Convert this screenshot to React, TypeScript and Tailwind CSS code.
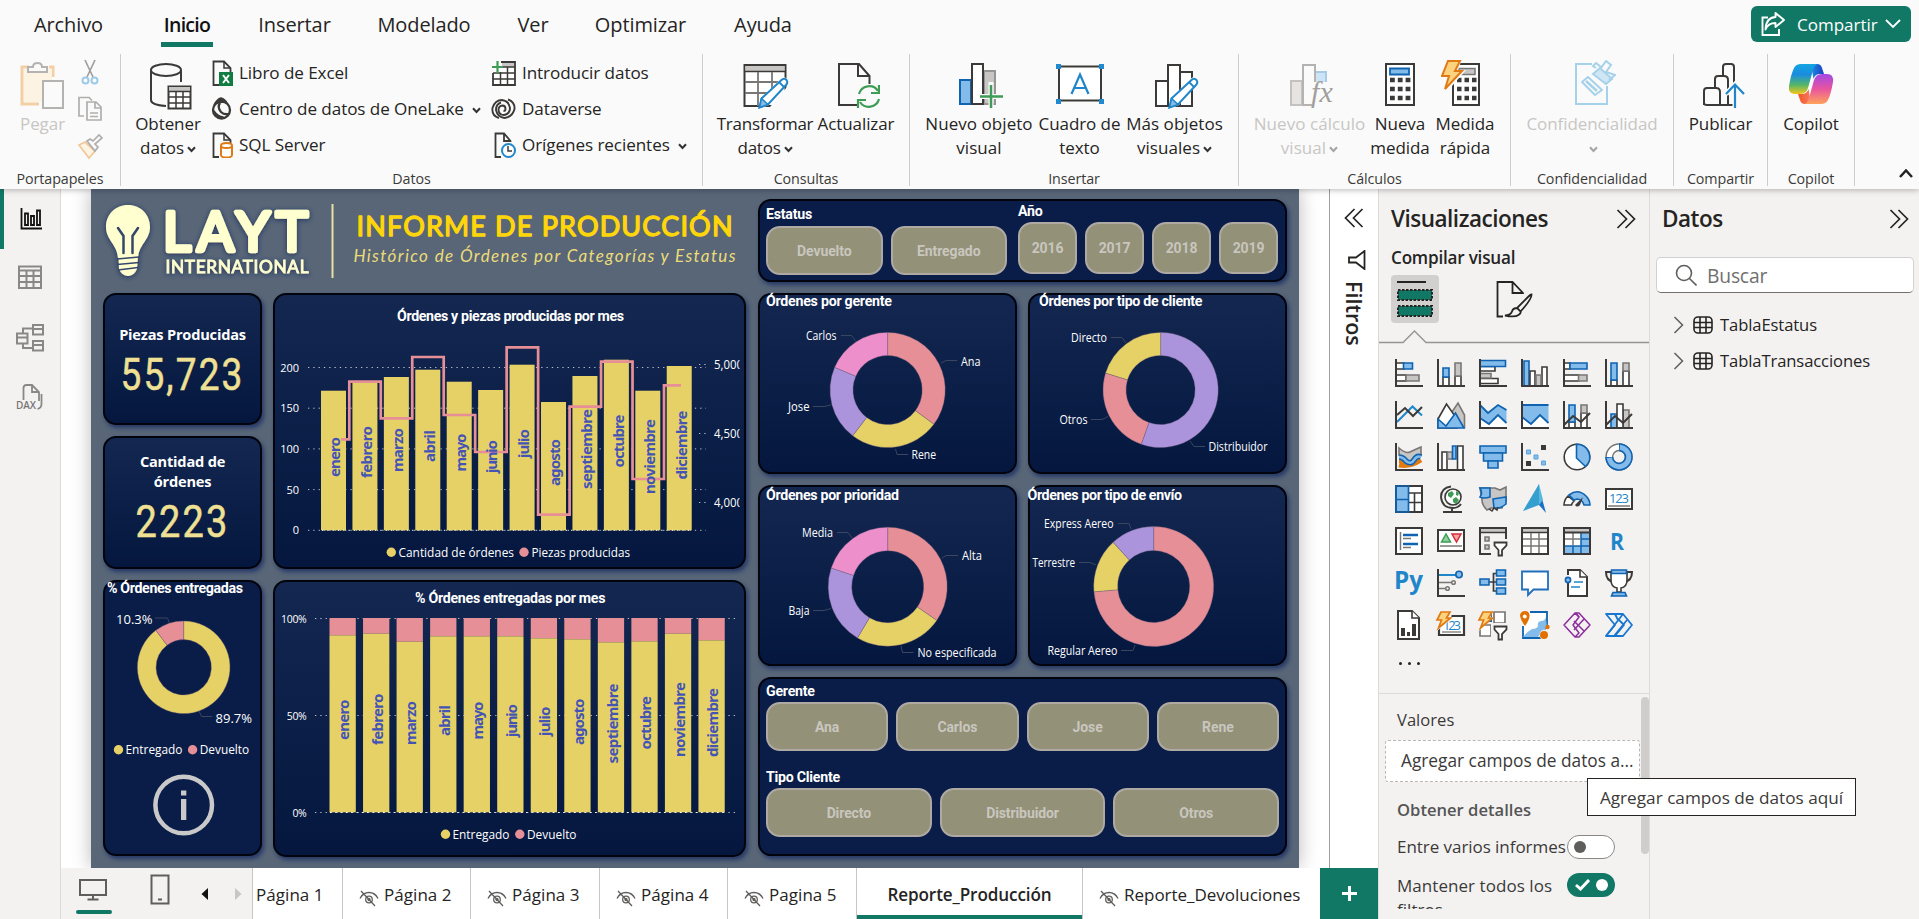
import type { ReactNode } from "react";

const YELLOW = "#e6d166";
const PINK = "#e68f96";
const PURPLE = "#ab94db";
const MAGENTA = "#ed8fcb";
const DARK = "#3b3a39";
const BLUE = "#83bbeb";
const BLUE_LINE = "#0f63b0";
const GRAY = "#c8c6c4";
const GRAY_LINE = "#797775";
const MONTHS = ["enero", "febrero", "marzo", "abril", "mayo", "junio", "julio", "agosto", "septiembre", "octubre", "noviembre", "diciembre"];

/* ---------- ribbon ---------- */

function Caret({ color = "#333" }: { color?: string }) {
  return (
    <svg className="ml-[3px] inline-block" width="9" height="7" viewBox="0 0 9 7" fill="none" stroke={color} strokeWidth="2">
      <path d="M1 1.200 4.500 5 8 1.200" />
    </svg>
  );
}

function Group({ label, className, children }: { label: string; className: string; children: ReactNode }) {
  return (
    <div className={`flex h-[132px] shrink-0 flex-col border-r border-[#cfcdcb] ${className}`}>
      <div className="flex h-[115px] shrink-0">{children}</div>
      <div className="text-center text-[14.3px] leading-5 whitespace-nowrap text-[#3b3a39]">{label}</div>
    </div>
  );
}

function Big({ icon, lines, caret, disabled, className }: { icon: ReactNode; lines: string[]; caret?: boolean; disabled?: boolean; className: string }) {
  return (
    <div className={`flex shrink-0 flex-col items-center pt-[6px] ${className}`}>
      <svg width="48" height="50" viewBox="0 0 48 50" fill="none">{icon}</svg>
      <div className={`mt-[2px] text-center text-[17px] leading-6 whitespace-nowrap ${disabled ? "text-[#c8c6c4]" : "text-[#252423]"}`}>
        {lines.map((line, i) => (
          <div key={i}>
            {line}
            {caret && i === lines.length - 1 && <Caret color={disabled ? "#a6a4a2" : "#333"} />}
          </div>
        ))}
      </div>
    </div>
  );
}

function Small({ icon, text, caret, wide }: { icon: ReactNode; text: string; caret?: boolean; wide?: boolean }) {
  return (
    <div className="flex h-9 items-center whitespace-nowrap">
      <svg width="26" height="26" viewBox="0 0 26 26" fill="none">{icon}</svg>
      <span className={wide ? "ml-[6px]" : "ml-[3px]"}>{text}</span>
      {caret && <span className="ml-[5px]"><Caret /></span>}
    </div>
  );
}

const pencil = (
  <>
    <path d="M18 49 20.500 38 40 18.500Q43 16 46 19 48 21.500 46 24L28 45Z" fill="#fafafa" />
    <path d="M18.500 47.500 20.500 38.500 40.500 20Q43 17.500 45.500 20 47.300 22.500 45 25L27 44.500Z" stroke="#1f86c9" strokeWidth="2" fill="#fff" />
    <path d="M18.500 47.500 20.500 38.500 27 44.500Z" fill={BLUE} stroke="#1f86c9" strokeWidth="1.500" />
    <path d="m38 22 5 5" stroke="#1f86c9" strokeWidth="1.800" />
  </>
);

const pageMini = <path d="M9 25H3.500V1.500H14L20.500 8v4" stroke={DARK} strokeWidth="1.800" />;

const icons = {
  paste: (
    <>
      <path d="M10 7H3v37h17M30 7h4v10" stroke="#f3cfa4" strokeWidth="3" />
      <path d="M5 9h28v33H5z" fill="#fdf3e2" />
      <path d="M9 12V7h5q0-4 4.500-4T23 7h5v5Z" fill="#fafafa" stroke="#b5b3b1" strokeWidth="2" />
      <path d="M24 21h20v27H24z" fill="#fafafa" stroke="#b5b3b1" strokeWidth="2" />
    </>
  ),
  db: (
    <>
      <ellipse cx="22" cy="10" rx="15" ry="6" stroke={DARK} strokeWidth="2" />
      <path d="M7 10v30q0 5 15 6M37 10v12" stroke={DARK} strokeWidth="2" />
      <path d="M24.500 26.500h22v22h-22z" fill="#fff" stroke={DARK} strokeWidth="2" />
      <path d="M25 27h21v4H25z" fill={GRAY} />
      <path d="M25 31.500h21M25 37h21M25 43h21M32 31v17M39 31v17" stroke={DARK} strokeWidth="1.500" />
    </>
  ),
  transform: (
    <>
      <path d="M3.500 5h41v41h-41z" fill="#fff" stroke={DARK} strokeWidth="2" />
      <path d="M4.500 6h39v5h-39z" fill={GRAY} />
      <path d="M4 11.500h40" stroke={DARK} strokeWidth="1.500" />
      <path d="M4 22h40M4 33h26M17 12v34M31 12v22" stroke={GRAY_LINE} strokeWidth="1.800" />
      <path d="M29 47 46 27v20Z" fill="#fafafa" />
      {pencil}
    </>
  ),
  refresh: (
    <>
      <path d="M27 45H7V4h20l10.500 12v8M26 4v12h11" stroke={DARK} strokeWidth="2" />
      <path d="M27 34a10.500 10.500 0 0 1 19-3M47 39a10.500 10.500 0 0 1-19 3" stroke="#3f9c56" strokeWidth="2.200" />
      <path d="M47 25v8h-8M26 48v-8h8" stroke="#3f9c56" strokeWidth="2.200" />
    </>
  ),
  newVisual: (
    <>
      <path d="M29 11h11v33H29z" fill={GRAY} stroke="#979593" strokeWidth="2" />
      <path d="M5 20h11v24H5z" fill={BLUE} stroke={BLUE_LINE} strokeWidth="2" />
      <path d="M17 4h11v40H17z" fill="#fff" stroke={DARK} strokeWidth="2" />
      <path d="M36 22v28M23 36.500h26" stroke="#fafafa" strokeWidth="5" />
      <path d="M36 25v23M25 36.500h23" stroke="#3f9c56" strokeWidth="2.500" />
    </>
  ),
  textBox: (
    <>
      <path d="M3 6.500h42v34H3z" fill="#fff" stroke={DARK} strokeWidth="2" />
      <path d="M0 4h5v5H0zM43 4h5v5h-5zM0 39h5v5H0zM43 39h5v5h-5z" fill="#1f8ad2" />
      <path d="M15.500 34 24 14.500 32.500 34M18.500 28h11" stroke="#1f86c9" strokeWidth="2.200" />
    </>
  ),
  moreVisuals: (
    <>
      <path d="M29 12h12v34H29zM5 21h12v25H5z" fill="#fff" stroke={DARK} strokeWidth="2" />
      <path d="M17 5h12v41H17z" fill="#fff" stroke={DARK} strokeWidth="2" />
      {pencil}
    </>
  ),
  newCalc: (
    <>
      <path d="M29 12h11v20H29z" fill="#cde3f6" stroke="#a9cce6" strokeWidth="2" />
      <path d="M5 21h11v24H5z" fill="#e5e4e3" stroke="#c4c2c0" strokeWidth="2" />
      <path d="M17 5h12v40H17z" fill="#fafafa" stroke="#b5b3b1" strokeWidth="2" />
      <path d="M26 22h20v28H26z" fill="#fafafa" />
      <text x="25" y="42" fill="#a19f9d" fontSize="30" fontStyle="italic" fontFamily="Liberation Serif, serif">fx</text>
    </>
  ),
  calc: (
    <>
      <path d="M10 4h28v41H10z" fill="#fff" stroke={DARK} strokeWidth="2" />
      <path d="M14 8.500h19v6H14z" fill={BLUE} stroke={BLUE_LINE} strokeWidth="1.800" />
      <path d="M14 20h21M14 29h21M14 38h21" stroke={DARK} strokeWidth="4.500" strokeDasharray="4.800 3" />
    </>
  ),
  quick: (
    <>
      <path d="M12 4h26v41H12z" fill="#fff" stroke={DARK} strokeWidth="2" />
      <path d="M18 8.500h16v6H18z" fill={GRAY} stroke={GRAY_LINE} strokeWidth="1.500" />
      <path d="M16 20h20M16 29h20M16 38h20" stroke={DARK} strokeWidth="4.500" strokeDasharray="4.500 3" />
      <path d="M5-1h16l-4 11h8L4 34l1-12H-1Z" fill="#fafafa" />
      <path d="M7 1h12l-5 10h7L4 29l4-13H1Z" fill="#fdd27f" stroke="#e07b13" strokeWidth="2" />
    </>
  ),
  sensitivity: (
    <g stroke="#a5d2ea" strokeWidth="2">
      <path d="M24 4H8v40h31V26" />
      <path d="m14 22 6-5 14 13-7 5Z" strokeLinejoin="round" />
      <path d="m18 21 11 10" strokeWidth="2.500" />
      <path d="m25 14 7-6 12 11-6 5Z" fill="#cfe6f4" />
      <path d="m33 8 5-7 5 4-5 7 9 3-6 5M28 8l-3-2 3-3 5 4" />
    </g>
  ),
  publish: (
    <>
      <path d="M7 45V31q0-3 3-3h8V19q0-3 3-3h5V7q0-3 3-3h5q3 0 3 3v18M7 43q0 2 3 2h26M19 28q4 0 4 4v12M19 28h1" stroke={DARK} strokeWidth="2" />
      <path d="M27 16q4 0 4 4v25" stroke={DARK} strokeWidth="2" />
      <path d="M38 48V25M29 34l9-9.500L47 34" stroke="#fafafa" strokeWidth="5" />
      <path d="M38 48V25M29 34l9-9.500L47 34" stroke="#1f86c9" strokeWidth="2.200" />
    </>
  ),
  copilot: (
    <>
      <defs>
        <linearGradient id="cp1" x1="0" y1="0" x2="0" y2="1"><stop offset="0" stopColor="#12a5e0" /><stop offset=".35" stopColor="#1a8ce0" /><stop offset=".7" stopColor="#55b765" /><stop offset="1" stopColor="#f6c51b" /></linearGradient>
        <linearGradient id="cp2" x1="0" y1="0" x2="0" y2="1"><stop offset="0" stopColor="#a347e6" /><stop offset=".5" stopColor="#e8559f" /><stop offset="1" stopColor="#ffa25a" /></linearGradient>
        <linearGradient id="cp3" x1="0" y1="0" x2="1" y2="0"><stop offset="0" stopColor="#1a8ce0" /><stop offset="1" stopColor="#1c3fc4" /></linearGradient>
        <linearGradient id="cp4" x1="0" y1="0" x2="1" y2="0"><stop offset="0" stopColor="#f05a28" /><stop offset="1" stopColor="#f9775e" /></linearGradient>
      </defs>
      <path d="M24 4h6q4 0 5 4l2 6h-4q-5 0-6.500 5Z" fill="url(#cp3)" />
      <path d="M24 44h-6q-4 0-5-4l-2-6h4q5 0 6.500-5Z" fill="url(#cp4)" />
      <path d="M14 4h16q-3 2-4 6l-5 18q-2 6-8 6H8Q1 34 2 26 4 14 7 8 9 4 14 4Z" fill="url(#cp1)" />
      <path d="M34 44H18q3-2 4-6l5-18q2-6 8-6h5q7 0 6 8-2 12-5 18-2 4-7 4Z" fill="url(#cp2)" />
    </>
  ),
  excel: (
    <>
      {pageMini}
      <path d="M14 1.500V8h6" stroke={DARK} strokeWidth="1.500" />
      <path d="M9 12h14v14H9z" fill="#107c41" />
      <path d="m13 15 6 8m0-8-6 8" stroke="#fff" strokeWidth="2" />
    </>
  ),
  onelake: (
    <>
      <circle cx="11.500" cy="14" r="8.500" stroke={DARK} strokeWidth="2.300" />
      <path d="M4 9Q7 3 11 2q4 1 6 5-4-2-7 0" fill={DARK} stroke={DARK} strokeWidth="1.500" />
      <path d="M10 7q-3 4 1 9 3 3 8 2M3.500 15q4 6 10 6.500" stroke={DARK} strokeWidth="2.300" />
    </>
  ),
  sql: (
    <>
      {pageMini}
      <path d="M14 1.500V8h6" stroke={DARK} strokeWidth="1.500" />
      <path d="M11 14v9q0 2.500 5.500 2.500T22 23v-9" fill="#fff" stroke="#e07b13" strokeWidth="2" />
      <ellipse cx="16.500" cy="13.500" rx="5.500" ry="2.500" fill="#fff" stroke="#e07b13" strokeWidth="2" />
    </>
  ),
  enter: (
    <>
      <path d="M11 2h14v23H3V13" fill="#fff" stroke={DARK} strokeWidth="1.800" />
      <path d="M12 3h12v4H12z" fill={GRAY} />
      <path d="M12 7h13M3 13h22M3 19h22M10.500 12v13M17.500 7v18" stroke={DARK} strokeWidth="1.500" />
      <path d="M7.500 1v12M2 7h11" stroke="#3f9c56" strokeWidth="2.200" />
    </>
  ),
  dataverse: (
    <g stroke={DARK} strokeWidth="1.900">
      <path d="M9 22Q1.500 20 2.500 12 5 4 12 4q7 1 8 8 0 6-6 7-5 0-5.500-5 0-4 4-4.500 3 0 3 3.500 0 2-2 2" />
      <path d="M18 3.500q7 2.500 6.500 9.500-2 8-10 9-7-1-8.500-8 0-6 5-7.500" />
    </g>
  ),
  recent: (
    <>
      <path d="M11 25H5.500V1.500H14L20.500 9v1M14 1.500V9h6" stroke={DARK} strokeWidth="1.800" />
      <circle cx="18.500" cy="18.500" r="6.500" fill="#fff" stroke="#1f86c9" strokeWidth="2" />
      <path d="M18 14v5h4" stroke={DARK} strokeWidth="1.500" />
    </>
  ),
};

function Ribbon() {
  const tabs: [string, string][] = [
    ["Archivo", "ml-[34px] w-[69px]"],
    ["Inicio", "ml-[58px] w-[52px]"],
    ["Insertar", "ml-[47px] w-[69px]"],
    ["Modelado", "ml-[48px] w-[94px]"],
    ["Ver", "ml-[47px] w-[30px]"],
    ["Optimizar", "ml-[47px] w-[91px]"],
    ["Ayuda", "ml-[48px] w-[58px]"],
  ];
  return (
    <header className="relative z-10 h-[189px] shrink-0 bg-[#fafafa] shadow-[0_1px_6px_rgba(0,0,0,0.28)]">
      <div className="flex h-[54px] items-start">
        {tabs.map(([name, cls]) => (
          <div key={name} className={`flex h-[47px] flex-col whitespace-nowrap ${cls}`}>
            <span className={`flex h-[42px] items-center justify-center pt-[7px] ${name === "Inicio" ? "text-[19.5px] font-semibold tracking-[-0.7px] text-[#111]" : "text-[20px] tracking-[-0.1px] text-[#252423]"}`}>{name}</span>
            {name === "Inicio" && <span className="h-[5px] bg-[#117865]" />}
          </div>
        ))}
        <div className="mt-[6px] mr-2 ml-auto flex h-9 w-[160px] items-center rounded-[6px] bg-[#117865] pl-[9px] text-white">
          <svg width="26" height="26" viewBox="0 0 26 26" fill="none" stroke="#fff" strokeWidth="1.900">
            <path d="M8 6.500H2.500V24H19v-6" />
            <path d="M15.500 2 24 9l-8.500 7v-4Q8 12 5.500 18.500 6 6.500 15.500 6Z" strokeLinejoin="round" />
          </svg>
          <span className="ml-[11px] pt-px text-[17px]">Compartir</span>
          <svg className="ml-[7px]" width="16" height="10" viewBox="0 0 16 10" fill="none" stroke="#fff" strokeWidth="1.800"><path d="m1 1 7 7 7-7" /></svg>
        </div>
      </div>
      <div className="flex text-[17.1px] tracking-[-0.08px] text-[#252423]">
        <Group label="Portapapeles" className="w-[121px]">
          <Big icon={icons.paste} lines={["Pegar"]} disabled className="ml-[16px] w-[53px]" />
          <div className="flex flex-col gap-[11px] pt-[5px] pl-[8px]">
            <svg width="26" height="26" viewBox="0 0 26 26" fill="none" strokeWidth="1.700">
              <path d="M8 1 16 18M18 1 10 18" stroke="#a19f9d" />
              <circle cx="8.500" cy="21.500" r="3" stroke="#9fcbe8" strokeWidth="2" /><circle cx="17.500" cy="21.500" r="3" stroke="#9fcbe8" strokeWidth="2" />
            </svg>
            <svg width="26" height="26" viewBox="0 0 26 26" fill="none" stroke="#b0aeac" strokeWidth="1.700">
              <path d="M7 20H2V1.500h10l3 3M10 6h9l5 5v13H10ZM18 6v6h6M13 17h8M13 20.500h8" />
            </svg>
            <svg width="26" height="26" viewBox="0 0 26 26" fill="none" strokeWidth="1.700">
              <path d="m2 12 6-3 10 9-6 7Z" fill="#fdf3e2" stroke="#f0c898" /><path d="m10 8 3-2 3 2 6-6 3 3-7 6 3 3-3 4Z" fill="#fafafa" stroke="#b0aeac" />
            </svg>
          </div>
        </Group>
        <Group label="Datos" className="w-[582px]">
          <Big icon={icons.db} lines={["Obtener", "datos"]} caret className="ml-[5px] w-[84px]" />
          <div className="w-[280px] pt-px">
            <Small icon={icons.excel} text="Libro de Excel" />
            <Small icon={icons.onelake} text="Centro de datos de OneLake" caret />
            <Small icon={icons.sql} text="SQL Server" />
          </div>
          <div className="pt-px">
            <Small wide icon={icons.enter} text="Introducir datos" />
            <Small wide icon={icons.dataverse} text="Dataverse" />
            <Small wide icon={icons.recent} text="Orígenes recientes" caret />
          </div>
        </Group>
        <Group label="Consultas" className="w-[207px]">
          <Big icon={icons.transform} lines={["Transformar", "datos"]} caret className="ml-[12px] w-[100px] tracking-[-0.25px]" />
          <Big icon={icons.refresh} lines={["Actualizar"]} className="w-[82px]" />
        </Group>
        <Group label="Insertar" className="w-[329px]">
          <Big icon={icons.newVisual} lines={["Nuevo objeto", "visual"]} className="ml-[14px] w-[110px] tracking-[0.05px]" />
          <Big icon={icons.textBox} lines={["Cuadro de", "texto"]} className="w-[91px]" />
          <Big icon={icons.moreVisuals} lines={["Más objetos", "visuales"]} caret className="w-[99px] tracking-[0.05px]" />
        </Group>
        <Group label="Cálculos" className="w-[272px]">
          <Big icon={icons.newCalc} lines={["Nuevo cálculo", "visual"]} caret disabled className="ml-[11px] w-[119px] tracking-[0.05px]" />
          <Big icon={icons.calc} lines={["Nueva", "medida"]} className="w-[62px]" />
          <Big icon={icons.quick} lines={["Medida", "rápida"]} className="w-[68px]" />
        </Group>
        <Group label="Confidencialidad" className="w-[163px]">
          <Big icon={icons.sensitivity} lines={["Confidencialidad", ""]} caret disabled className="w-full" />
        </Group>
        <Group label="Compartir" className="w-[94px]">
          <Big icon={icons.publish} lines={["Publicar"]} className="w-full" />
        </Group>
        <Group label="Copilot" className="w-[87px]">
          <Big icon={icons.copilot} lines={["Copilot"]} className="w-full" />
        </Group>
        <div className="flex flex-1 items-end justify-end pr-[6px] pb-[8px]">
          <svg width="14" height="9" viewBox="0 0 14 9" fill="none" stroke="#252423" strokeWidth="2.500"><path d="m1 8 6-6.500L13 8" /></svg>
        </div>
      </div>
    </header>
  );
}

/* ---------- left rail ---------- */

function Rail() {
  return (
    <nav className="flex w-[61px] shrink-0 flex-col border-r border-[#dddbd9] bg-[#f3f2f1]">
      <div className="flex h-[60px] items-center border-l-4 border-[#117865] pl-[15px]">
        <svg width="24" height="24" viewBox="0 0 24 24" fill="none" stroke="#111" strokeWidth="1.800">
          <path d="M2.500 1v20.500H23M6 6.500h3V18H6zM12 9h3v9h-3zM18 3.500h3V18h-3z" />
        </svg>
      </div>
      <div className="flex h-[56px] items-center justify-center">
        <svg width="26" height="26" viewBox="0 0 26 26" fill="none" stroke="#8a8886" strokeWidth="2">
          <path d="M2 2.500h22v21.500H2zM2 6.500h22M2 12h22M2 18h22M9.500 6v18M16.500 6v18" />
        </svg>
      </div>
      <div className="flex h-[65px] items-center justify-center">
        <svg width="30" height="30" viewBox="0 0 30 30" fill="none" stroke="#8a8886" strokeWidth="2">
          <path d="M2 10.500h10.500v10H2zM2 14.500h10M18 2h10v9.500H18zM18 6h10M18 18h10v9.500H18zM18 22h10M8 10V5.500h10M8 21v4h10" />
        </svg>
      </div>
      <div className="flex h-[54px] items-center justify-center pr-[3px]">
        <svg width="28" height="28" viewBox="0 0 28 28" fill="none" stroke="#8a8886" strokeWidth="1.800">
          <path d="M8.500 17V5q0-3 3-3H17l7 7v9M17 2v7h7M26.500 11v10q0 4-4 5" />
          <text x="1" y="25.500" fontSize="10" fontWeight="600" fill="#797775" stroke="none" textLength="20" fontFamily="Open Sans, sans-serif">DAX</text>
        </svg>
      </div>
    </nav>
  );
}

/* ---------- report ---------- */

const CARD = "shrink-0 rounded-[13px] border-2 border-[#01040d] bg-linear-to-b from-[#132750] to-[#05173f] shadow-[2px_3px_4px_rgba(22,42,98,0.75)]";
const FLAT = "shrink-0 rounded-[13px] border-2 border-[#01040d] bg-[#0a1d48] shadow-[2px_3px_4px_rgba(22,42,98,0.75)]";

function Title({ x, y, w, children }: { x: number; y: number; w: number; children: string }) {
  return <text x={x} y={y} textLength={w} fontSize="14.2" fontWeight="700" fill="#fff" fontFamily="Roboto, sans-serif">{children}</text>;
}

function Lab({ x, y, w, size = 12.200, children }: { x: number; y: number; w: number; size?: number; children: string }) {
  return <text x={x} y={y} textLength={w} lengthAdjust="spacingAndGlyphs" fontSize={size} fill="#fff" fontFamily="Open Sans, sans-serif">{children}</text>;
}

function Month({ x, y, len, children }: { x: number; y: number; len: number; children: string }) {
  return (
    <text transform={`translate(${x} ${y}) rotate(-90)`} textLength={len} fontSize="15" fontWeight="700" fill="#4454b4" fontFamily="Noto Sans, sans-serif">{children}</text>
  );
}

type Slice = [number, string];

function Donut({ cx, cy, r, inner, slices }: { cx: number; cy: number; r: number; inner: number; slices: Slice[] }) {
  const point = (deg: number, rad: number) => {
    const a = ((deg - 90) * Math.PI) / 180;
    return `${(cx + rad * Math.cos(a)).toFixed(2)} ${(cy + rad * Math.sin(a)).toFixed(2)}`;
  };
  return (
    <>
      {slices.map(([end, color], i) => {
        const start = i ? slices[i - 1][0] : 0;
        const large = end - start > 180 ? 1 : 0;
        return (
          <path
            key={i}
            d={`M${point(start, r)}A${r} ${r} 0 ${large} 1 ${point(end, r)}L${point(end, inner)}A${inner} ${inner} 0 ${large} 0 ${point(start, inner)}Z`}
            fill={color}
            stroke="#6b5a78"
            strokeOpacity=".6"
            strokeWidth=".6"
          />
        );
      })}
    </>
  );
}

const Leader = ({ d }: { d: string }) => <path d={d} fill="none" stroke="#3a4560" strokeWidth="1" />;

function Logo() {
  return (
    <svg className="block overflow-visible" width="643" height="104" viewBox="103 189 643 104">
      <defs>
        <filter id="glow" x="-20%" y="-20%" width="140%" height="140%">
          <feDropShadow dx="0" dy="1" stdDeviation="2.500" floodColor="#122a5c" floodOpacity=".9" />
        </filter>
      </defs>
      <g filter="url(#glow)">
        <path d="M128 205c13 0 22 10 22 22 0 13-11 17-12 31h-20c-1-14-12-18-12-31 0-12 9-22 22-22Z" fill="#ffffcf" />
        <path d="M118 228l5.500 8v17M138 228l-5.500 8v17" fill="none" stroke="#35476b" strokeWidth="2.500" strokeLinecap="round" />
        <path d="M118.500 257h19.500l-1 12q-3 7-9 7t-9-7Z" fill="#ffffcf" />
        <path d="m117 259 22-2M117 264.500l22-2M118 270l20-2.500" stroke="#35476b" strokeWidth="1.500" />
        <text x="163" y="250.500" textLength="145" fontSize="54.500" fontWeight="400" fill="#ffffcf" stroke="#ffffcf" strokeWidth="4.500" strokeLinejoin="round" fontFamily="Lato, sans-serif">LAYT</text>
        <text x="165.500" y="273" textLength="143" fontSize="17.300" fontWeight="400" fill="#ffffcf" stroke="#ffffcf" strokeWidth=".8" fontFamily="Lato, sans-serif">INTERNATIONAL</text>
      </g>
      <path d="M332.500 204v74" stroke="#e9dfa2" strokeWidth="2" />
      <text x="356.500" y="236.300" textLength="376" fontSize="27" fontWeight="400" fill="#ffd60a" stroke="#ffd60a" strokeWidth="1.300" strokeLinejoin="round" fontFamily="Lato, sans-serif">INFORME DE PRODUCCIÓN</text>
      <text x="353.500" y="262" textLength="382" fontSize="17" fontStyle="italic" fill="#ecdc78" fontFamily="Lato, sans-serif">Histórico de Órdenes por Categorías y Estatus</text>
    </svg>
  );
}

function MonthlyChart() {
  const tops = [390.700, 382.500, 377, 369.700, 381.700, 390, 364.700, 402, 376, 359.700, 390.700, 366];
  const steps = [439.300, 381.700, 418.300, 357, 415, 452, 347.300, 514.700, 406.700, 361.700, 479, 385.300];
  const marks = [[340, 477, 40], [371.700, 478, 52], [403, 472, 44], [434.500, 462, 32], [465.500, 471.500, 38], [497, 473, 33], [528.500, 458, 29], [560, 486, 47], [591.500, 489, 80], [623.700, 467.500, 53], [655, 494, 75], [686.700, 479.500, 69]];
  const line = steps.map((y, i) => (i === 0 ? `M341 ${y}` : `H${349.300 + (i - 1) * 31.470}V${y}`)).join("") + "H681";
  return (
    <div className={`${CARD} h-[276px]`}>
      <svg className="block overflow-visible" width="469" height="272" viewBox="275 295 469 272">
        <defs><clipPath id="plot"><path d="M275 295h464.500v272H275z" /></clipPath></defs>
        <Title x={397} y={320.500} w={227}>Órdenes y piezas producidas por mes</Title>
        {[200, 150, 100, 50, 0].map((v, i) => (
          <g key={v}>
            <path d={`M308 ${367.500 + i * 40.700}H706`} stroke="#b9c0d0" strokeWidth="1" strokeDasharray="1.300 4" />
            <text x="299" y={371.500 + i * 40.700} textAnchor="end" fontSize="11" fontWeight="500" fill="#fff" fontFamily="Open Sans, sans-serif">{v}</text>
          </g>
        ))}
        <g clipPath="url(#plot)">
          {["5,000", "4,500", "4,000"].map((v, i) => (
            <g key={v}>
              <path d={`M699 ${364.500 + i * 69}H706`} stroke="#b9c0d0" strokeDasharray="1.300 4" />
              <Lab x={714} y={368.500 + i * 69} w={29} size={12}>{v}</Lab>
            </g>
          ))}
        </g>
        {tops.map((y, i) => <rect key={i} x={321 + i * 31.430} y={y} width="25" height={530.300 - y} fill={YELLOW} />)}
        <path d="M322 530.300H691" stroke="#fff" strokeDasharray="1.300 4" />
        <path d={line} fill="none" stroke={PINK} strokeWidth="2.700" />
        {marks.map(([x, y, len], i) => <Month key={i} x={x} y={y} len={len}>{MONTHS[i]}</Month>)}
        <circle cx="391.300" cy="552.300" r="4.700" fill={YELLOW} />
        <Lab x={398.500} y={557} w={115.500} size={12.800}>Cantidad de órdenes</Lab>
        <circle cx="524" cy="552.300" r="4.700" fill={PINK} />
        <Lab x={531.500} y={557} w={98.500} size={12.800}>Piezas producidas</Lab>
      </svg>
    </div>
  );
}

function DeliveredChart() {
  const split = [635.300, 633.700, 641.700, 636.300, 636.300, 636.300, 638.300, 639.300, 642.300, 641.300, 633.700, 640.300];
  const marks = [[740, 40.500], [745, 51.500], [745, 44], [736, 31], [739.500, 38], [737, 33], [736, 29.500], [745, 46.500], [763.500, 80], [749.500, 53.500], [757, 75], [757, 69]];
  return (
    <div className={`${CARD} h-[277px]`}>
      <svg className="block overflow-visible" width="469" height="273" viewBox="275 582 469 273">
        <Title x={415} y={602.500} w={190.500}>% Órdenes entregadas por mes</Title>
        {["100%", "50%", "0%"].map((v, i) => (
          <g key={v}>
            <path d={`M315 ${618.500 + i * 97}H737`} stroke="#b9c0d0" strokeWidth="1" strokeDasharray="1.300 4" />
            <text x="306.500" y={622.500 + i * 97} textAnchor="end" fontSize="10.500" fontWeight="500" letterSpacing="-.3" fill="#fff" fontFamily="Open Sans, sans-serif">{v}</text>
          </g>
        ))}
        {split.map((y, i) => (
          <g key={i}>
            <rect x={329.500 + i * 33.540} y="618" width="26.300" height={y - 618} fill={PINK} />
            <rect x={329.500 + i * 33.540} y={y} width="26.300" height={812.300 - y} fill={YELLOW} />
            <Month x={349.200 + i * 33.540} y={marks[i][0]} len={marks[i][1]}>{MONTHS[i]}</Month>
          </g>
        ))}
        <path d="M330 812.500H725" stroke="#fff" strokeDasharray="1.300 4" />
        <circle cx="445.500" cy="834.300" r="4.700" fill={YELLOW} />
        <Lab x={452.500} y={839} w={57} size={12.800}>Entregado</Lab>
        <circle cx="519.800" cy="834.300" r="4.700" fill={PINK} />
        <Lab x={527} y={839} w={49.500} size={12.800}>Devuelto</Lab>
      </svg>
    </div>
  );
}

function StatusCard() {
  return (
    <div className={`${FLAT} h-[276px]`}>
      <svg className="block overflow-visible" width="155" height="272" viewBox="105 582 155 272">
        <Title x={107} y={592.500} w={136}>% Órdenes entregadas</Title>
        <Donut cx={183.700} cy={667.300} r={46.300} inner={27.700} slices={[[323, YELLOW], [360, PINK]]} />
        <Leader d="M155 618h12.500l2 5" /><Leader d="M199 711l2.500 5.500H212" />
        <Lab x={116} y={623.700} w={36.500} size={12.600}>10.3%</Lab>
        <Lab x={215.500} y={722.700} w={36.500} size={12.600}>89.7%</Lab>
        <circle cx="118.500" cy="749.700" r="4.700" fill={YELLOW} />
        <Lab x={125.500} y={754.300} w={57} size={12.800}>Entregado</Lab>
        <circle cx="192.600" cy="749.700" r="4.700" fill={PINK} />
        <Lab x={199.700} y={754.300} w={49.500} size={12.800}>Devuelto</Lab>
        <circle cx="183.700" cy="805" r="28.300" fill="none" stroke="#c9c9c9" strokeWidth="4.500" />
        <path d="M181 790.500h5.300v5H181zM181 799h5.300v21H181z" fill="#c9c9c9" />
      </svg>
    </div>
  );
}

function Kpi({ lines, value, digits, className }: { lines: string[]; value: string; digits: number; className: string }) {
  return (
    <div className={`${CARD} flex flex-col items-center ${className}`}>
      {lines.map((l) => <div key={l} className="text-[14.6px] leading-5 font-bold tracking-[-0.2px] text-white">{l}</div>)}
      <svg className="mt-[12px] block" width="155" height="42" viewBox="0 0 155 42">
        <text x={77.500 - digits / 2} y="34" textLength={digits} lengthAdjust="spacingAndGlyphs" fontSize="43.500" fill="#efe093" stroke="#efe093" strokeWidth=".5" letterSpacing="2.500" fontFamily="Roboto, sans-serif">{value}</text>
      </svg>
    </div>
  );
}

function DonutCard({ ox, oy, children }: { ox: number; oy: number; children: ReactNode }) {
  return (
    <div className={`${CARD} h-[181px] w-[259px]`}>
      <svg className="block overflow-visible" width="255" height="177" viewBox={`${ox + 2} ${oy + 2} 255 177`}>{children}</svg>
    </div>
  );
}

function Slicer({ label, options, row, labelClass = "" }: { label: string; options: string[]; row: string; labelClass?: string }) {
  return (
    <div>
      <div className={`font-[Roboto,sans-serif] text-[14.2px] leading-4 font-bold tracking-[-0.25px] text-white ${labelClass}`}>{label}</div>
      <div className={`flex gap-[8px] ${row}`}>
        {options.map((o) => (
          <div key={o} className="flex flex-1 items-center justify-center rounded-[14px] border-2 border-[#aeaaa3] bg-[#939178] pt-px font-[Roboto,sans-serif] text-[14px] font-bold tracking-[-0.1px] text-[#c8c6be]">{o}</div>
        ))}
      </div>
    </div>
  );
}

function Report() {
  return (
    <div className="flex h-[679px] w-[1208px] bg-[#586678] pl-3 shadow-[0_0_18px_rgba(0,0,0,0.28)]">
      <div className="w-[643px]">
        <Logo />
        <div className="flex gap-[11px]">
          <div className="flex w-[159px] flex-col gap-[11px]">
            <Kpi lines={["Piezas Producidas"]} value="55,723" digits={124} className="h-[132px] pt-[29px]" />
            <Kpi lines={["Cantidad de", "órdenes"]} value="2223" digits={94} className="h-[133px] pt-[13px]" />
            <StatusCard />
          </div>
          <div className="flex w-[473px] flex-col gap-[11px]">
            <MonthlyChart />
            <DeliveredChart />
          </div>
        </div>
      </div>
      <div className="ml-3 flex w-[529px] flex-col gap-[11px] pt-[10px]">
        <div className={`${FLAT} flex h-[83px] gap-[11px] pl-[6px]`}>
          <Slicer label="Estatus" options={["Devuelto", "Entregado"]} row="h-[49px] w-[241px] mt-[4px]" labelClass="pt-[5px]" />
          <Slicer label="Año" options={["2016", "2017", "2018", "2019"]} row="h-[52px] w-[260px] mt-[3px]" labelClass="pt-[2px]" />
        </div>
        <div className="flex gap-[11px]">
          <DonutCard ox={758} oy={293}>
            <Title x={766} y={306} w={126}>Órdenes por gerente</Title>
            <Donut cx={887.600} cy={390} r={57.600} inner={34.600} slices={[[126.600, PINK], [217.300, YELLOW], [293.200, PURPLE], [360, MAGENTA]]} />
            <Leader d="M841 335.500h10.500l4 5.500" /><Leader d="M941 363l5-2.500h11" /><Leader d="M813 406.500h11l7-1.500" /><Leader d="M895.500 449l1.500 5.500h11" />
            <Lab x={806} y={340} w={30.500}>Carlos</Lab><Lab x={961} y={366} w={19.500}>Ana</Lab><Lab x={788} y={411} w={21.500}>Jose</Lab><Lab x={911.500} y={459} w={24.500}>Rene</Lab>
          </DonutCard>
          <DonutCard ox={1028} oy={293}>
            <Title x={1039} y={306} w={163.500}>Órdenes por tipo de cliente</Title>
            <Donut cx={1160.600} cy={390} r={57.600} inner={34.600} slices={[[199.600, PURPLE], [287.100, PINK], [360, YELLOW]]} />
            <Leader d="M1111 337.500h11l4 5.500" /><Leader d="M1091 419.500h11l6-3" /><Leader d="M1190 441l4 5.500h11" />
            <Lab x={1071} y={342.300} w={36}>Directo</Lab><Lab x={1059.500} y={424} w={28}>Otros</Lab><Lab x={1208.500} y={451} w={59}>Distribuidor</Lab>
          </DonutCard>
        </div>
        <div className="flex gap-[11px]">
          <DonutCard ox={758} oy={485}>
            <Title x={766} y={500} w={133}>Órdenes por prioridad</Title>
            <Donut cx={887.700} cy={586.700} r={59.500} inner={36} slices={[[124.500, PINK], [210.500, YELLOW], [288.300, PURPLE], [360, MAGENTA]]} />
            <Leader d="M837 532.500h11l4 5.500" /><Leader d="M942 558l4-2.500h12" /><Leader d="M813 610.500h11l7-2" /><Leader d="M901 646l1.500 6.500h11" />
            <Lab x={802} y={537.300} w={31}>Media</Lab><Lab x={962} y={560.300} w={20}>Alta</Lab><Lab x={788.500} y={615} w={21}>Baja</Lab><Lab x={917.500} y={657} w={79}>No especificada</Lab>
          </DonutCard>
          <DonutCard ox={1028} oy={485}>
            <Title x={1027.500} y={500} w={154.500}>Órdenes por tipo de envío</Title>
            <Donut cx={1153.700} cy={586.500} r={60} inner={36} slices={[[264.900, PINK], [317.400, YELLOW], [360, PURPLE]]} />
            <Leader d="M1118 523.500h11l2 5.500" /><Leader d="M1079 562.500h11l6 2.500" /><Leader d="M1121 650.500h12l2-5.500" />
            <Lab x={1044} y={528.300} w={69.500}>Express Aereo</Lab><Lab x={1032.500} y={567.300} w={42.500}>Terrestre</Lab><Lab x={1047.500} y={655} w={70}>Regular Aereo</Lab>
          </DonutCard>
        </div>
        <div className={`${FLAT} h-[179px] pl-[6px]`}>
          <Slicer label="Gerente" options={["Ana", "Carlos", "Jose", "Rene"]} row="h-[49px] w-[513px] mt-[3px]" labelClass="pt-[4px]" />
          <Slicer label="Tipo Cliente" options={["Directo", "Distribuidor", "Otros"]} row="h-[49px] w-[513px] mt-[3px]" labelClass="pt-[18px]" />
        </div>
      </div>
    </div>
  );
}

/* ---------- page tabs ---------- */

function EyeOff() {
  return (
    <svg className="mt-[7px] shrink-0" width="20" height="17" viewBox="0 0 20 17" fill="none" stroke="#605e5c" strokeWidth="1.300">
      <path d="M1 8.500Q4 2.500 10 2.500t9 6M2 1l14 15" /><circle cx="10" cy="9.500" r="3.300" /><circle cx="10" cy="9.500" r="1" />
    </svg>
  );
}

function PageTabs() {
  const pages: [string, string][] = [["Página 2", "w-[128px]"], ["Página 3", "w-[129px]"], ["Página 4", "w-[128px]"], ["Pagina 5", "w-[129px]"]];
  return (
    <div className="flex h-[51px] w-[1317px] text-[17px] tracking-[0.05px] whitespace-nowrap text-[#252423]">
      <div className="flex w-[191px] shrink-0 bg-[#f3f2f1]">
        <div className="ml-[15px] flex w-[36px] flex-col items-center pt-[10px]">
          <svg className="-ml-[2px]" width="30" height="24" viewBox="0 0 30 24" fill="none" stroke="#605e5c" strokeWidth="2"><path d="M2 2h26v15H2zM15 17v4M9.500 21.500h11" /></svg>
          <span className="mt-[8px] h-[4px] w-[36px] rounded-full bg-[#117865]" />
        </div>
        <svg className="mt-[6px] ml-[38px]" width="20" height="32" viewBox="0 0 20 32" fill="none" stroke="#605e5c" strokeWidth="2"><path d="M1.500 1.500h17v28h-17zM8 25.500h4" /></svg>
        <svg className="mt-[20px] ml-[31px]" width="7" height="12" viewBox="0 0 7 12"><path d="M7 0v12L.5 6Z" fill="#111" /></svg>
        <svg className="mt-[20px] ml-[27px]" width="7" height="12" viewBox="0 0 7 12"><path d="M0 0v12l6.500-6Z" fill="#c8c6c4" /></svg>
      </div>
      <div className="flex w-[91px] shrink-0 items-center border-x border-[#c8c6c4] bg-white pt-[3px] pl-[3px]">Página 1</div>
      {pages.map(([name, w]) => (
        <div key={name} className={`flex shrink-0 items-center border-r border-[#c8c6c4] bg-white pt-[3px] pl-[16px] ${w}`}>
          <EyeOff /><span className="ml-[5px]">{name}</span>
        </div>
      ))}
      <div className="flex w-[226px] shrink-0 flex-col border-r border-[#c8c6c4] bg-white">
        <span className="flex flex-1 items-center justify-center pt-[7px] text-[17.1px] font-semibold tracking-[-0.1px]">Reporte_Producción</span>
        <span className="h-[4px] bg-[#117865]" />
      </div>
      <div className="flex w-[237px] shrink-0 items-center bg-white pt-[3px] pl-[16px]"><EyeOff /><span className="ml-[5px] tracking-[-0.02px]">Reporte_Devoluciones</span></div>
      <div className="flex flex-1 items-center justify-center bg-[#117865]">
        <svg width="15" height="15" viewBox="0 0 15 15" stroke="#fff" strokeWidth="3"><path d="M7.500 0v15M0 7.500h15" /></svg>
      </div>
    </div>
  );
}

/* ---------- side panes ---------- */

function DoubleChevron({ left }: { left?: boolean }) {
  return (
    <svg width="20" height="20" viewBox="0 0 20 20" fill="none" stroke="#252423" strokeWidth="1.700">
      <path d={left ? "M10.500 1 1.500 10l9 9M18.500 1l-9 9 9 9" : "m1.500 1 9 9-9 9M9.500 1l9 9-9 9"} />
    </svg>
  );
}

function Filters() {
  return (
    <aside className="flex h-[679px] w-[49px] shrink-0 flex-col items-center border-l border-[#a19f9d] bg-white">
      <div className="mt-[19px]"><DoubleChevron left /></div>
      <svg className="mt-[22px] ml-[6px]" width="18" height="20" viewBox="0 0 18 20" fill="none" stroke="#252423" strokeWidth="1.800"><path d="M16.500 1v18L8 12.500H1v-5h7Z" /></svg>
      <div className="mt-[11px] text-[21.5px] leading-[26px] font-semibold text-[#252423] [writing-mode:vertical-rl]">Filtros</div>
    </aside>
  );
}

const axis = <path d="M1 0v27h27" stroke={DARK} strokeWidth="2" />;
const funnel = <path d="M15.500 15.500h12v3l-4.500 4.500v5.500h-3.500V23l-4-4.500Z" fill="#fff" stroke={DARK} strokeWidth="1.800" />;
const bolt = <path d="M4 1h9L9.500 7h4L1.500 17l3-8H0Z" fill="#fdd27f" stroke="#e07b13" strokeWidth="1.700" />;
const W = { fill: "#fff", stroke: DARK, strokeWidth: 1.600 };
const G = { fill: GRAY, stroke: GRAY_LINE, strokeWidth: 1.600 };
const B = { fill: BLUE, stroke: BLUE_LINE, strokeWidth: 1.600 };

const visuals: ReactNode[] = [
  <><path d="M1 4h8v6H1zM1 16h10v6H1z" {...W} /><path d="M8.500 4h9v6h-9z" {...B} /><path d="M11 16h13v6H11z" {...G} />{axis}</>,
  <><path d="M6 18h6v9H6zM18 17h6v10h-6z" {...W} /><path d="M6 9h6v9H6z" {...B} /><path d="M18 4h6v13h-6z" {...G} />{axis}</>,
  <><path d="M1 7.500h15V12H1zM1 19.500h18v5H1z" {...W} /><path d="M1 14.500h11v4.500H1z" {...G} /><path d="M1 1.500h25.500v6H1z" {...B} />{axis}</>,
  <><path d="M3 2h5v25H3z" {...B} /><path d="M9 12h5v15H9zM21 8h5v19h-5z" {...W} /><path d="M15 16h5v11h-5z" {...G} />{axis}</>,
  <><path d="M1 4h6v6H1zM1 16h15v6H1z" {...W} /><path d="M7 4h17v6H7z" {...B} /><path d="M15.500 16h8.500v6h-8.500z" {...G} />{axis}</>,
  <><path d="M6 21h6v6H6zM18 12h6v15h-6z" {...W} /><path d="M6 4h6v17H6z" {...B} /><path d="M18 4h6v8h-6z" {...G} />{axis}</>,
  <><path d="M2 21 17.500 5.500 27 14.500" stroke="#1f86c9" strokeWidth="2" /><path d="M2 14 10 7l8 8 9-9" stroke={DARK} strokeWidth="2" />{axis}</>,
  <><path d="m13 14 8-12 6.500 12v13" {...G} /><path d="M1 18 9.500 3 20 18v9H1Z" {...W} /><path d="m1 18 8 7 9.500-13L27 27H1Z" {...B} /></>,
  <><path d="m1 17 8 6 9.500-9 9 8v5H1Z" fill="#fff" /><path d="m1 4 8 8 10-8 8.500 5v13L19 14l-9 9-9-6Z" fill={BLUE} /><path d="m1 4 8 8 10-8 8.500 5M1 17l9 6 9-9 8.500 8" stroke={BLUE_LINE} strokeWidth="1.800" />{axis}</>,
  <><path d="m1 16 9 7 9-9 8.500 8v5H1Z" fill="#fff" /><path d="M1 4h26.500v18L19 14l-9 9-9-7Z" fill={BLUE} /><path d="M1 4h26.500M1 16l9 7 9-9 8.500 8" stroke={BLUE_LINE} strokeWidth="1.800" />{axis}</>,
  <><path d="M6 21h6v6H6zM18 12h6v15h-6z" {...W} /><path d="M6 4h6v17H6z" {...B} /><path d="M18 4h6v8h-6z" {...G} /><path d="m1 24 9-9 8 6 9-9" stroke={DARK} strokeWidth="2" />{axis}</>,
  <><path d="M18 9h6v18h-6z" {...G} /><path d="M6 13h6v14H6z" {...B} /><path d="M12 3h6v24h-6z" {...W} /><path d="m1 24 9-9 8 7 9-9" stroke={DARK} strokeWidth="2" />{axis}</>,
  <><path d="M4 22q11 2 22-5" stroke="#e07b13" strokeWidth="5" /><path d="M4 18q5 0 9 3" stroke="#e07b13" strokeWidth="4" /><path d="M4 5q7 6 11 4t11-5v8q-6 1-11 6T4 12Z" {...G} /><path d="M4 14q4 0 7 4 5 4 8-1t7-3" stroke={BLUE_LINE} strokeWidth="5.500" /><path d="M4 14q4 0 7 4 5 4 8-1t7-3" stroke={BLUE} strokeWidth="2.500" />{axis}</>,
  <><path d="M5 9h5v18H5zM20.500 3h5.500v24h-5.500z" {...W} /><path d="M10.500 9h5v7h-5z" {...G} /><path d="M15.500 3H19v13h-3.500z" {...B} />{axis}</>,
  <><path d="M1 3h26v7H1z" {...B} /><path d="M4.500 10h19v8h-19z" {...B} /><path d="M9 18h10v7H9z" {...B} /></>,
  <><path d="M5.500 7h4v4h-4zM13 12h4v4h-4zM20.500 18h4v4h-4z" fill={BLUE} stroke="#5ba3db" strokeWidth="1" /><path d="M20 2h5v5h-5zM5 18h5v5H5z" fill={DARK} />{axis}</>,
  <><circle cx="14" cy="14" r="12.800" {...W} /><path d="M13.500 1.200A12.800 12.800 0 0 1 22.500 23.500L13.500 15Z" {...B} /></>,
  <><circle cx="14" cy="14" r="9.700" stroke={GRAY_LINE} strokeWidth="8" /><circle cx="14" cy="14" r="9.700" stroke="#fff" strokeWidth="5" /><path d="M14 4.300a9.700 9.700 0 1 1-9.700 9.700" stroke={BLUE_LINE} strokeWidth="8" /><path d="M14.800 4.300a9.700 9.700 0 1 1-10.400 10.400" stroke={BLUE} strokeWidth="5" /></>,
  <><path d="M1 1h26v26H1z" {...W} strokeWidth={2} /><path d="M2 2h11v24H2z" fill={BLUE} /><path d="M13.500 1v26H1V1ZM1 14.500h12" stroke={BLUE_LINE} strokeWidth="1.700" /><path d="M14 8h13M14 17.500h13M19.500 8v19" stroke={DARK} strokeWidth="1.600" /></>,
  <><circle cx="16" cy="12" r="8" fill="#fff" stroke={DARK} strokeWidth="1.600" /><path d="m11 8 4-2 2 3-3 4-3-2ZM16 14l3-2 3 3-3 4-3-2ZM19 6l3 2-1 3-2-1Z" fill="#3f9c56" /><path d="M14 1.500Q4 3 4 12q1 11 12 11 5 0 8-4M15 23v4M6 27h19" stroke={DARK} strokeWidth="1.900" /></>,
  <><path d="M1 3h15l5 2 6-3v14q-3 2-4 7H12l-4 2Q3 20 3 15Z" {...G} /><path d="M1 3h10v9q-6 2-10 0 3-4 0-9ZM14 14l13-2v7q-5 4-8 4h-4Z" {...B} /><path d="m19 22-1 3-3-2-2 3-3-2" stroke={DARK} strokeWidth="1.500" /></>,
  <><path d="m17-1 8 29-7-8Z" fill="#1b6fc4" /><path d="M18-1 2 26l16-6Z" fill="#35a0cf" /><path d="m18-1 4 16-4 5Z" fill="#58b8dc" /></>,
  <><path d="M1 20A13 13 0 0 1 5 11l6 5q-2 2-2.500 4Z" {...W} /><path d="M6 10q9-7 17 1 4 4 4 9h-6q-2-6-7-6l-3 1Z" {...B} /><path d="m12 20 8-8-3 8q-3 3-5 0Z" fill={DARK} /></>,
  <><path d="M1 4h26v20H1z" {...W} strokeWidth={2} /><text x="4" y="17.500" fontSize="13" textLength="20" fill="#1f86c9" fontFamily="Open Sans, sans-serif">123</text><path d="M3 21h22" stroke={GRAY_LINE} strokeWidth="1.500" /></>,
  <><path d="M1 1h26v26H1z" {...W} strokeWidth={2} /><path d="M5.500 5v18M8 11.500h8M8 20.500h8" stroke={GRAY_LINE} strokeWidth="1.500" /><path d="M8 8h15M8 17h15" stroke={BLUE_LINE} strokeWidth="2.500" /></>,
  <><path d="M1 3h26v21H1z" {...W} strokeWidth={2} /><path d="m4.500 15 4.500-8 4.500 8Z" fill="#8fd0a0" stroke="#3f9c56" strokeWidth="1.500" /><path d="M15 7h9l-4.500 8Z" fill="#f4a3a7" stroke="#d32f36" strokeWidth="1.500" /><path d="M3 19h22" stroke={GRAY_LINE} strokeWidth="1.500" /></>,
  <><path d="M1 1h26v26H1z" {...W} fill="#f3f2f1" strokeWidth={2} /><path d="M2 2h24v3H2z" fill={GRAY} /><path d="M1 5.500h26" stroke={DARK} strokeWidth="1.500" /><path d="M6 10h4v4H6zM6 18h4v4H6z" {...G} /><path d="M12 12h17v17H12z" fill="#f3f2f1" />{funnel}</>,
  <><path d="M1 1h26v26H1z" {...W} strokeWidth={2} /><path d="M2 2h24v3H2z" fill={GRAY} /><path d="M1 5.500h26" stroke={DARK} strokeWidth="1.500" /><path d="M2 12h24M2 19h24M10 6v20M18 6v20" stroke={GRAY_LINE} strokeWidth="1.500" /></>,
  <><path d="M1 1h26v26H1z" {...W} strokeWidth={2} /><path d="M2 2h24v3H2z" fill={GRAY} /><path d="M18 6h8v20H2v-7h16Z" fill={BLUE} /><path d="M2 19h24M18 6v20M10 19v7M18 12h8" stroke={BLUE_LINE} strokeWidth="1.500" /><path d="M2 12h16M10 6v13" stroke={GRAY_LINE} strokeWidth="1.500" /><path d="M1 1h26v26H1ZM1 5.500h26" stroke={DARK} strokeWidth="1.800" /></>,
  <text x="5.000" y="22.500" fontSize="24" fontWeight="700" textLength="14" lengthAdjust="spacingAndGlyphs" fill="#1f86c9" fontFamily="Open Sans, sans-serif">R</text>,
  <text x="-1" y="20" fontSize="25" fontWeight="700" textLength="29" lengthAdjust="spacingAndGlyphs" fill="#1f86c9" fontFamily="Open Sans, sans-serif">Py</text>,
  <><path d="M1 6h18" stroke="#1f86c9" strokeWidth="2" /><circle cx="22" cy="5.500" r="3.200" {...B} /><path d="M1 13.500h14M1 19.500h8" stroke={GRAY_LINE} strokeWidth="1.600" /><circle cx="16.500" cy="13.500" r="1.800" stroke={GRAY_LINE} strokeWidth="1.500" /><circle cx="10.500" cy="19.500" r="1.800" stroke={GRAY_LINE} strokeWidth="1.500" />{axis}</>,
  <><path d="M10 13h7M14.500 13V4.500H18M14.500 13v9H18" stroke={DARK} strokeWidth="1.700" /><path d="M1 10h9v6H1zM17.500 1h9v6h-9zM17.500 10h9v6h-9zM17.500 19h9v6h-9z" {...B} /></>,
  <path d="M1 2.500h26v18H12.500L7 26v-5.500H1Z" fill="#fff" stroke="#1f6fbd" strokeWidth="1.800" />,
  <><path d="M5 6V1h12l7 7v19H5V14" {...W} strokeWidth={2} /><path d="M17 1v7h7" {...W} /><circle cx="5" cy="11" r="2.600" {...B} /><path d="M11 13h9M8 18h9" stroke="#1f86c9" strokeWidth="1.600" /></>,
  <><path d="M6 3H1q0 9 8 10M22 3h5q0 9-8 10" stroke={DARK} strokeWidth="2" /><path d="M6 3h16v8q0 7-6 8v4h-4v-4q-6-1-6-8Z" {...W} /><path d="M6.500 1h15v3.500h-15zM8 23.500h12l1.500 3.500h-15z" {...B} /></>,
  <><path d="M3 0h14l7 7v21H3Z" {...W} strokeWidth={2} /><path d="M17 0v7h7" {...W} /><path d="M6 17h4v8H6zM12 21h3v4h-3zM17 13h4v12h-4z" fill={DARK} /></>,
  <><path d="M2 5h25v19H2z" {...W} strokeWidth={2.200} /><text x="6" y="18.500" fontSize="13" textLength="18" fill="#1f86c9" fontFamily="Open Sans, sans-serif">123</text><path d="M5 21h19" stroke={GRAY_LINE} strokeWidth="1.300" /><path d="M2-2h14l-2 9h2L0 20h-2V5Z" fill="#f3f2f1" />{bolt}</>,
  <><path d="M15 1h11v11H15zM1 14h11v11H1z" fill="#fff" stroke={GRAY_LINE} strokeWidth="1.700" /><path d="M12 12h17v17H12z" fill="#f3f2f1" /><path d="M9 1h4v10H9z" fill={BLUE_LINE} /><path d="M2-2h11l-1 8h2L0 20h-2V5Z" fill="#f3f2f1" />{funnel}{bolt}</>,
  <><path d="M9 1h17v13l-7 13H2V15" fill="#fff" stroke={BLUE_LINE} strokeWidth="1.800" /><path d="M24 2q2 8-4 8-4 1-3 5-1 3-6 3-4 2-9 8h15l9-10Z" fill={BLUE} /><path d="M-1 4Q0 0 4 0t4.500 4Q9 8 4 15-1 8-1 4Z" fill="#e07000" /><circle cx="3.800" cy="5.500" r="2" fill="#fff" /><circle cx="24" cy="24" r="5.500" fill="#f3f2f1" /><circle cx="23" cy="24" r="4" fill="#e07000" /><circle cx="26.500" cy="16" r="2.200" fill="#e07000" /></>,
  <g stroke="#8c2d9c" strokeWidth="1.500" strokeLinejoin="round"><path d="M12 2 1 14l11 12h4L27 14 16 2ZM12 2l4 4-6 8 6 8-4 4" /><path d="m16 6-3-4M11 10l10 10M21 8 11 19" /></g>,
  <g stroke="#1878d0" strokeWidth="1.800" strokeLinejoin="round"><path d="M1 3h17l9 11-9 11H1l9-11Z" /><path d="m18 3-17 22M10 3l3 6M14 9l5 5-9 11M22 9 9 25" /></g>,
];

function Visualizations() {
  return (
    <aside className="flex w-[272px] shrink-0 flex-col border-x border-[#dddbd9] bg-[#f3f2f1] text-[#252423]">
      <div className="flex h-[59px] shrink-0 items-center justify-between pr-[13px] pl-[12px]">
        <h2 className="pt-px text-[22.5px] font-semibold tracking-[-0.5px]">Visualizaciones</h2><DoubleChevron />
      </div>
      <h3 className="mt-[-3px] h-[30px] shrink-0 pl-[12px] text-[17.1px] leading-[26px] font-semibold tracking-[-0.2px]">Compilar visual</h3>
      <div className="flex h-[48px] shrink-0 pl-[12px]">
        <div className="flex size-[48px] items-center justify-center rounded-[4px] bg-[#d2d0ce]">
          <svg width="36" height="36" viewBox="0 0 36 36" fill="none" stroke="#252423" strokeWidth="2">
            <path d="M0 1h29" /><path d="M1 9h34v10H1zM1 25h34v10H1z" fill="#117865" strokeDasharray="2.500 1.500" />
          </svg>
        </div>
        <svg className="mt-[6px] ml-[57px]" width="37" height="37" viewBox="0 0 37 37" fill="none" stroke="#252423" strokeWidth="1.800">
          <path d="M7 35.500H1.500V1h15L27 12v1M16.500 1v11H27" /><path d="M35.500 13.500q-1 0-3 2L21 27l3.500 3.500Q36 18 35.500 13.500ZM21 27q-4 0-5 3.500T9 34.500q10 2 13.500-.5 3-2 2-4" />
        </svg>
      </div>
      <svg className="mt-[5px] shrink-0" width="270" height="16" viewBox="0 0 270 16" fill="none" stroke="#979593" strokeWidth="1.400"><path d="M0 14.500h24L35.500 3 47 14.500h223" /></svg>
      <div className="mt-[15px] grid shrink-0 grid-cols-[repeat(6,28px)] gap-[14px] pl-[16px]">
        {visuals.map((v, i) => <svg key={i} className="overflow-visible" width="28" height="28" viewBox="0 0 28 28" fill="none">{v}</svg>)}
      </div>
      <div className="mt-[23px] flex shrink-0 gap-[6px] pl-[20px]">
        {[0, 1, 2].map((i) => <span key={i} className="size-[3px] rounded-full bg-[#252423]" />)}
      </div>
      <div className="mt-[28px] flex h-[225px] shrink-0 border-t border-[#dddbd9]">
        <div className="h-[215px] w-[261px] shrink-0 overflow-hidden pl-[6px] text-[17px] text-[#3b3a39]">
          <div className="mt-[14px] pl-[12px] text-[16.6px] leading-6">Valores</div>
          <div className="mt-[8px] flex h-[42px] w-[255px] items-center rounded-[3px] border border-dashed border-[#bab8b7] bg-white pl-[15px] text-[17.3px] whitespace-nowrap">Agregar campos de datos a...</div>
          <div className="mt-[16px] pl-[12px] text-[16.6px] leading-6 font-semibold text-[#555]">Obtener detalles</div>
          <div className="mt-[12px] flex items-center pl-[12px] leading-6 tracking-[-0.05px]">
            <span className="w-[170px] pt-px whitespace-nowrap">Entre varios informes</span>
            <span className="flex h-6 w-12 items-center rounded-full border border-[#8a8886] bg-white pl-[6px]"><span className="size-3 rounded-full bg-[#605e5c]" /></span>
          </div>
          <div className="mt-[14px] flex items-start pl-[12px] leading-6 tracking-[0.05px]">
            <span className="w-[170px] pt-px">Mantener todos los filtros</span>
            <span className="flex h-6 w-12 items-center justify-between rounded-full bg-[#117865] pr-[7px] pl-[8px]">
              <svg width="15" height="12" viewBox="0 0 15 12" fill="none" stroke="#fff" strokeWidth="3"><path d="m1 6 4.500 4L14 1" /></svg>
              <span className="size-[12px] rounded-full bg-white" />
            </span>
          </div>
        </div>
        <div className="mt-[3px] ml-[1px] h-[157px] w-[8px] rounded-full bg-[#d0cecc]" />
      </div>
    </aside>
  );
}

function DataPane() {
  return (
    <aside className="flex min-w-0 flex-1 flex-col bg-[#f3f2f1] text-[#252423]">
      <div className="flex h-[59px] items-center justify-between pr-[10px] pl-[12px]">
        <h2 className="pt-px text-[22.5px] font-semibold tracking-[-0.5px]">Datos</h2><DoubleChevron />
      </div>
      <div className="mt-[9px] mr-[5px] ml-[6px] flex h-[36px] items-center rounded-[5px] border border-[#d1d1d1] border-b-[#707070] bg-white pl-[18px] text-[19.3px] text-[#707070]">
        <svg width="22" height="22" viewBox="0 0 22 22" fill="none" stroke="#605e5c" strokeWidth="1.600"><circle cx="9" cy="9" r="7.500" /><path d="m14.500 14.500 7 7" /></svg>
        <span className="ml-[10px] pt-[3px] tracking-[-0.2px]">Buscar</span>
      </div>
      <div className="mt-[14px] flex flex-col">
        {["TablaEstatus", "TablaTransacciones"].map((t) => (
          <div key={t} className="flex h-[36px] items-center pl-[23px]">
            <svg width="11" height="18" viewBox="0 0 11 18" fill="none" stroke="#605e5c" strokeWidth="1.500"><path d="m1.500 1 8 8-8 8" /></svg>
            <svg className="ml-[9px]" width="20" height="18" viewBox="0 0 20 18" fill="none" stroke="#252423" strokeWidth="1.600"><rect x="1" y="1" width="18" height="16" rx="4" /><path d="M1 6.500h18M1 11.500h18M7 1v16M13 1v16" /></svg>
            <span className="ml-[7px] pt-px text-[16.6px] tracking-[-0.1px]">{t}</span>
          </div>
        ))}
      </div>
    </aside>
  );
}

export default function App() {
  return (
    <div className="relative flex h-[919px] w-[1919px] flex-col overflow-hidden bg-white font-['Open_Sans',sans-serif]">
      <Ribbon />
      <div className="flex h-[730px]">
        <Rail />
        <main className="flex w-[1317px] shrink-0 flex-col">
          <div className="flex h-[679px]">
            <div className="w-[1268px] shrink-0 overflow-hidden bg-white pl-[30px]"><Report /></div>
            <Filters />
          </div>
          <PageTabs />
        </main>
        <Visualizations />
        <DataPane />
      </div>
      <div className="absolute top-[778px] left-[1587px] z-20 flex h-[38px] w-[269px] items-center justify-center border border-[#252423] bg-white pt-px text-[17.2px] whitespace-nowrap text-[#3b3a39]">Agregar campos de datos aquí</div>
    </div>
  );
}
